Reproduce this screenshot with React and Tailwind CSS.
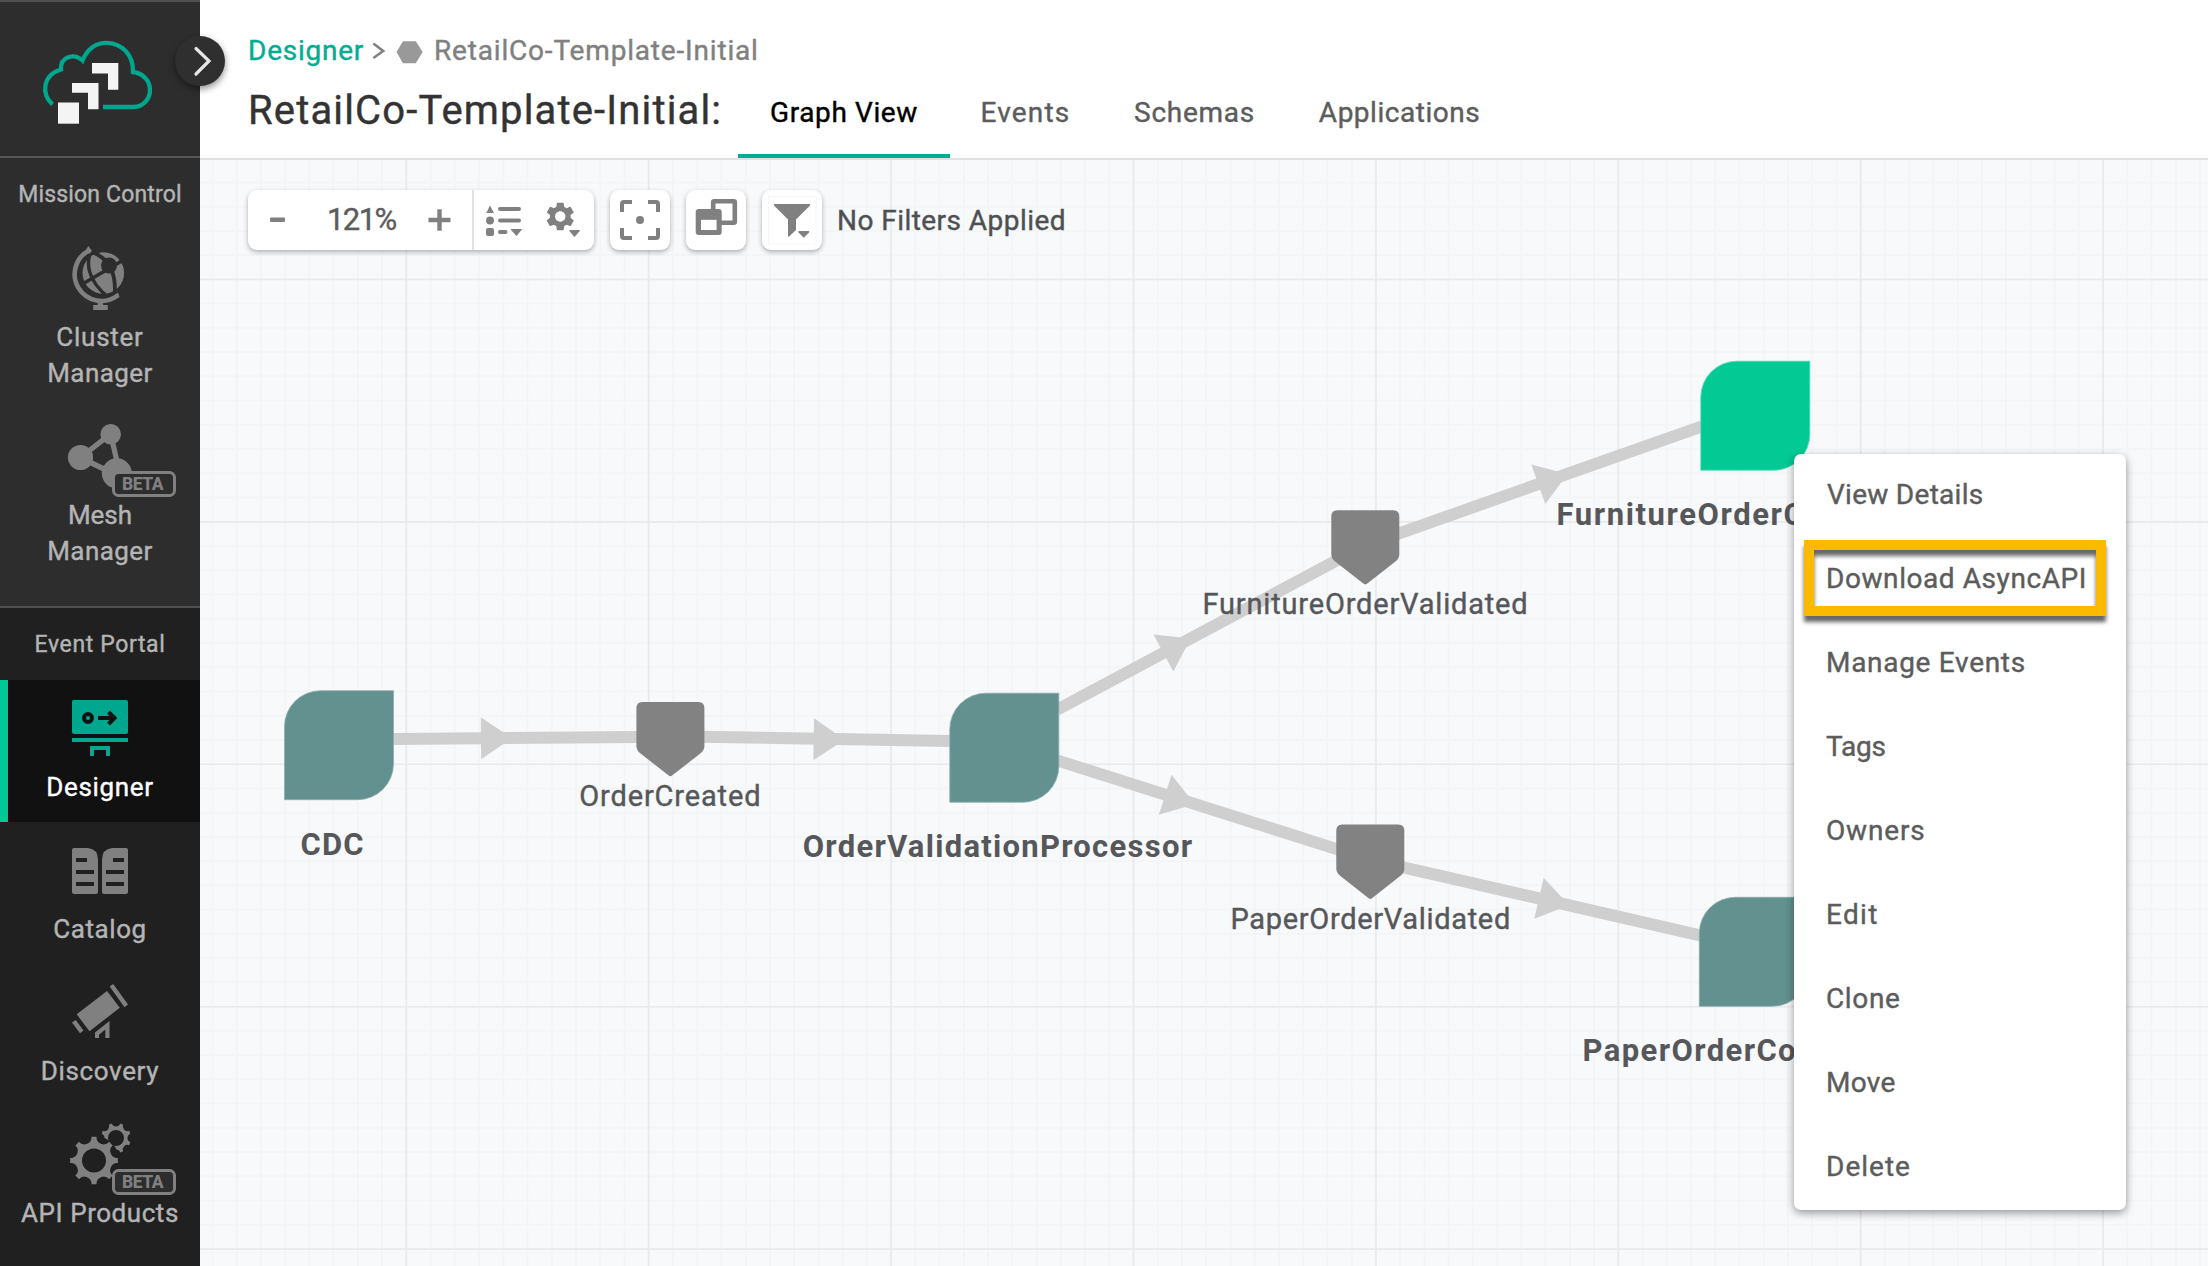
import React from "react";
import { MdSettings } from "react-icons/md";

const range = (start, step, end) => {
  const out = [];
  for (let v = start; v < end; v += step) out.push(v);
  return out;
};

/* ---------- gear outline with concave gaps between the teeth ---------- */
function gearPath(cx, cy, r, hole, offset, depth) {
  const pt = (deg) => {
    const a = (deg * Math.PI) / 180;
    return `${(cx + r * Math.cos(a)).toFixed(2)} ${(cy + r * Math.sin(a)).toFixed(2)}`;
  };
  let d = `M${pt(offset - 6)}`;
  for (let k = 0; k < 8; k++) {
    const a = offset + k * 45;
    d += ` L${pt(a + 6)} A${depth} ${depth} 0 0 0 ${pt(a + 39)}`;
  }
  d += ` Z M${cx + hole} ${cy} A${hole} ${hole} 0 1 0 ${cx - hole} ${cy} A${hole} ${hole} 0 1 0 ${cx + hole} ${cy} Z`;
  return d;
}

/* ---------- sidebar ---------- */
function Beta({ y }) {
  return (
    <g>
      <rect x="113.5" y={y + 1.5} width="61" height="23" rx="5" fill="#2d2d2d" stroke="#808080" strokeWidth="3" />
      <text x="122" y={y + 19} className="fill-[#808080] text-[17.5px] font-extrabold tracking-[-0.5px]">BETA</text>
    </g>
  );
}

function CloudLogo() {
  return (
    <svg viewBox="0 2 200 154" className="h-[154px] w-[200px]" fill="none">
      <path
        d="M52.5 104.5 C41 94 42.5 75 61 69.5 C60 57 74 52.5 82.5 60.5 C87.500 48 97 42.800 106 42.800 C122 42.800 133.500 55 133 72 C143 73 150 81 150 90 C150 100 142 107 134 107 H103"
        stroke="#00a78f"
        strokeWidth="4.300"
      />
      <g fill="#f4f4f4">
        <path d="M58 102.500H79V123.700H58Z" />
        <path d="M72 83H98.500V109.300H88V92.700H72Z" />
        <path d="M92 63H118.300V89.700H108V73.500H92Z" />
      </g>
    </svg>
  );
}

function GlobeIcon() {
  return (
    <svg viewBox="0 212 200 107" className="h-[107px] w-[200px]" fill="none">
      <circle cx="103.300" cy="273" r="20.800" fill="#808080" />
      <path d="M92.500 248 C85 262 87 280 108 297" stroke="#2d2d2d" strokeWidth="3.400" />
      <path d="M92 252 C108 258 117 272 114.500 297" stroke="#2d2d2d" strokeWidth="3.800" />
      <path d="M80 285.500 L126 258.500" stroke="#2d2d2d" strokeWidth="3.600" />
      <circle cx="109" cy="265.500" r="8" fill="#2d2d2d" />
      <path d="M89.500 250.300 A26.700 26.700 0 1 0 117.500 295.500" stroke="#808080" strokeWidth="4.600" />
      <path d="M86 249.500 L88.500 246 L92 251 L89 254 Z M115.500 294.500 L118 292.500 L119.500 297 L115 299.500 Z" fill="#808080" />
      <path d="M97.700 299H103V305H107.800V310H93.200V305H97.700Z" fill="#808080" />
    </svg>
  );
}

function MeshIcon() {
  return (
    <svg viewBox="0 391 200 106" className="h-[106px] w-[200px] overflow-visible">
      <g stroke="#808080" strokeWidth="5.300">
        <path d="M80.500 457.500 L110.700 434 L118 466 M80.500 457.500 L112 473" fill="none" />
      </g>
      <g fill="#808080">
        <circle cx="80.500" cy="457.500" r="12.600" />
        <circle cx="110.700" cy="434.200" r="10.300" />
        <circle cx="116.800" cy="473.300" r="15" />
      </g>
      <Beta y={471} />
    </svg>
  );
}

function BoardIcon() {
  return (
    <svg viewBox="0 680 200 89" className="-ml-2 h-[89px] w-[200px]" fill="none">
      <rect x="72" y="700" width="56" height="34" rx="2" fill="#00a78f" />
      <path d="M72 738H128V742H72Z M90 746H110V756H106V750H94V756H90Z" fill="#00a78f" />
      <circle cx="88" cy="718" r="4" stroke="#111" strokeWidth="4" />
      <path d="M98 718H114 M108.500 712L114.500 718L108.500 724" stroke="#111" strokeWidth="4" />
    </svg>
  );
}

function CatalogIcon() {
  return (
    <svg viewBox="0 822 200 89" className="h-[89px] w-[200px]">
      <path d="M74 848H88Q98 849 98 860V892Q98 894 96 894H74Q72 894 72 892V850Q72 848 74 848Z" fill="#808080" />
      <path d="M126 848H112Q102 849 102 860V892Q102 894 104 894H126Q128 894 128 892V850Q128 848 126 848Z" fill="#808080" />
      <path
        d="M76 858H87V862H76Z M76 870H94V874H76Z M76 882H94V886H76Z M113 858H124V862H113Z M106 870H124V874H106Z M106 882H124V886H106Z"
        fill="#202020"
      />
    </svg>
  );
}

function TelescopeIcon() {
  return (
    <svg viewBox="0 947 200 106" className="h-[106px] w-[200px]" fill="#808080">
      <path d="M76.700 1014.300L107 991L119.800 1007.700L89.500 1031.300Z" />
      <path d="M109.700 986.500L113.200 984L128 1004.500L124.500 1007.300Z" />
      <path d="M72 1022.500L75.700 1020L83.500 1030.500L80 1033.300Z" />
      <path d="M95 1038V1032.500L109.500 1021V1038H105.300V1029.500L99 1034.800V1038Z" />
    </svg>
  );
}

function GearsIcon() {
  return (
    <svg viewBox="0 1089 200 106" className="h-[106px] w-[200px] overflow-visible">
      <path d={gearPath(116, 1138, 15, 8, 22.5, 4.6)} fill="#808080" fillRule="evenodd" />
      <circle cx="94" cy="1160.500" r="25" fill="#202020" />
      <path d="M94 1160 L104 1139 L112 1144 L116 1152 Z" fill="#202020" />
      <path d={gearPath(94, 1160.5, 24, 12, 0, 7.2)} fill="#808080" fillRule="evenodd" />
      <Beta y={1169} />
    </svg>
  );
}

function NavLabel({ className, children }) {
  return <div className={`text-center text-[26px] leading-9 ${className}`}>{children}</div>;
}

function Sidebar() {
  return (
    <aside className="relative flex h-full w-[200px] shrink-0 flex-col border-t-2 border-[#4f4f4f] bg-[#202020] text-[#b4b4b4]">
      <div className="h-[156px] border-b-2 border-[#575757] bg-[#2d2d2d]">
        <CloudLogo />
      </div>
      <section className="h-[450px] border-b-2 border-[#4f4f4f] bg-[#2d2d2d] pt-[19px]">
        <h2 className="-mb-px text-center text-[23px] leading-9 tracking-[0.16px]">Mission Control</h2>
        <GlobeIcon />
        <NavLabel className="tracking-[0.75px]">Cluster</NavLabel>
        <NavLabel className="tracking-[0.45px]">Manager</NavLabel>
        <MeshIcon />
        <NavLabel className="tracking-[0px]">Mesh</NavLabel>
        <NavLabel className="tracking-[0.45px]">Manager</NavLabel>
      </section>
      <section className="pt-[19px]">
        <h2 className="text-center text-[23px] leading-9 tracking-[0.63px]">Event Portal</h2>
        <div className="mt-[17px] h-[142px] border-l-8 border-[#00c895] bg-[#111111]">
          <BoardIcon />
          <NavLabel className="-ml-2 tracking-[0.68px] text-white">Designer</NavLabel>
        </div>
        <CatalogIcon />
        <NavLabel className="tracking-[0.6px]">Catalog</NavLabel>
        <TelescopeIcon />
        <NavLabel className="tracking-[0.65px]">Discovery</NavLabel>
        <GearsIcon />
        <NavLabel className="tracking-[0.55px]">API Products</NavLabel>
      </section>
      <button className="absolute left-[175px] top-[34px] z-10 size-[50px] rounded-full bg-[#2f2f2f] shadow-[0_3px_7px_rgba(0,0,0,0.45)]">
        <svg viewBox="0 0 50 50" className="size-[50px]" fill="none">
          <path d="M21 12.500L34 25L21 38" stroke="#e6e6e6" strokeWidth="3.200" strokeLinecap="round" />
        </svg>
      </button>
    </aside>
  );
}

/* ---------- header ---------- */
const tabs = [
  { label: "Graph View", cls: "w-[212px] border-b-4 border-[#00ad93] text-black tracking-[0.6px]" },
  { label: "Events", cls: "w-[151px] tracking-[1.2px] text-[#5c5c5c]" },
  { label: "Schemas", cls: "w-[187px] tracking-[0.72px] text-[#5c5c5c]" },
  { label: "Applications", cls: "w-[223px] tracking-[0.52px] text-[#5c5c5c]" },
];

function Header() {
  return (
    <header className="h-[160px] border-b-2 border-[#e1e1e1] bg-white pl-12 pt-[33px]">
      <nav className="flex h-9 items-center text-[28px] leading-9 text-[#808080]">
        <span className="w-[116px] tracking-[0.76px] text-[#00ad93]">Designer</span>
        <svg viewBox="0 1 70 36" className="h-9 w-[69px]" fill="none">
          <path d="M9.500 11.500L19.500 19L9.500 26" stroke="#808080" strokeWidth="2.500" />
          <path d="M39.500 9H52.500L59.500 20L52.500 31.500H39.500L33 20Z" fill="#999" />
        </svg>
        <span className="ml-px tracking-[0.82px]">RetailCo-Template-Initial</span>
      </nav>
      <div className="flex h-[89px]">
        <h1 className="w-[490px] pt-[18px] text-[40px] leading-[48px] tracking-[1.15px] text-[#333333]">
          RetailCo-Template-Initial:
        </h1>
        <div className="flex h-[89px]">
          {tabs.map((t) => (
            <div key={t.label} className={`pt-[26px] text-center text-[28px] leading-9 ${t.cls}`}>
              {t.label}
            </div>
          ))}
        </div>
      </div>
    </header>
  );
}

/* ---------- toolbar ---------- */
const card = "h-[60px] rounded-[9px] bg-white shadow-[0_2px_5px_rgba(0,0,0,0.3)]";

function Toolbar() {
  return (
    <div className="relative flex items-center gap-4">
      <div className={`flex w-[346px] items-center ${card}`}>
        <svg viewBox="248 190 79 60" className="h-[60px] w-[79px]">
          <rect x="270" y="217.500" width="15" height="4.500" rx="1" fill="#808080" />
        </svg>
        <span className="w-[72px] text-[31px] leading-9 tracking-[-1.6px] text-[#5c5c5c]">121%</span>
        <svg viewBox="399 190 195 60" className="h-[60px] w-[195px]" fill="#808080">
          <path d="M428.500 217.700H437.300V209.300H441.700V217.700H450.500V222.300H441.700V230.700H437.300V222.300H428.500Z" />
          <path d="M472 190H474V250H472Z" fill="#e1e1e1" />
          <path d="M490 205.500L494 213H486.300Z" />
          <circle cx="490" cy="220.500" r="4" />
          <rect x="486" y="228" width="8" height="8" rx="2" />
          <rect x="498" y="207" width="23" height="4" rx="2" />
          <rect x="498" y="218.500" width="23" height="4" rx="2" />
          <rect x="498" y="230" width="9.500" height="4" rx="2" />
          <path d="M511.500 229H521.500Q522 229.500 521.500 230L516.500 236L511 230Q510.500 229.300 511.500 229Z" />
          <MdSettings x="543" y="199.200" size={34.5} color="#808080" />
          <path d="M570 230H579.500Q580.500 230.300 579.500 231.300L574.500 237L569.500 231.300Q568.800 230.300 570 230Z" />
        </svg>
      </div>
      <div className={`w-[60px] ${card}`}>
        <svg viewBox="0 0 60 60" className="size-[60px]" fill="none">
          <path d="M22 12H14Q12 12 12 14V22M38 12H46Q48 12 48 14V22M12 38V46Q12 48 14 48H22M48 38V46Q48 48 46 48H38" stroke="#808080" strokeWidth="4" />
          <circle cx="30" cy="30" r="4" fill="#808080" />
        </svg>
      </div>
      <div className={`w-[60px] ${card}`}>
        <svg viewBox="0 0 60 60" className="size-[60px]" fill="none">
          <rect x="27.200" y="11.200" width="21.600" height="21.600" rx="1" stroke="#808080" strokeWidth="4.600" />
          <rect x="9.700" y="19" width="26" height="26" rx="3" fill="#808080" />
          <path d="M15 29.800H30.600V40H15Z" fill="#fff" />
        </svg>
      </div>
      <div className={`w-[60px] ${card}`}>
        <svg viewBox="0 0 60 60" className="size-[60px]">
          <rect x="6.500" y="6.500" width="47.500" height="47.500" fill="none" stroke="#f6f6f6" />
          <path d="M12.500 14H47.500Q48.500 14.500 48 15.500L34 29.500V40L26.800 46.700Q26 47 26 46V29.500L12 15.500Q11.500 14.500 12.500 14Z" fill="#808080" />
          <path d="M37 41H46.500Q48 41.200 47 42.500L41.800 47.800L36.500 42.500Q35.800 41.200 37 41Z" fill="#808080" />
        </svg>
      </div>
      <span className="-ml-px pt-[2px] text-[28px] leading-9 tracking-[0.45px] text-[#4f5052]">No Filters Applied</span>
    </div>
  );
}

/* ---------- graph ---------- */
const edges = [
  { from: [393, 739], to: [638, 737], arrow: [481, 738.3], angle: -0.5 },
  { from: [703, 736.8], to: [951, 741], arrow: [813.7, 739.2], angle: 1 },
  { from: [1057, 709.8], to: [1345, 556], arrow: [1163.4, 653], angle: -28.1 },
  { from: [1395, 534.8], to: [1702, 426.3], arrow: [1538.3, 484.2], angle: -19.4 },
  { from: [1057, 760.4], to: [1340, 850.1], arrow: [1165.2, 794.8], angle: 17.6 },
  { from: [1400, 866.6], to: [1701, 935.6], arrow: [1539, 898.4], angle: 12.9 },
];

const apps = [
  { x: 284.5, y: 690.7, fill: "#629190", edge: "#8aadac" },
  { x: 949.8, y: 693.2, fill: "#629190", edge: "#8aadac" },
  { x: 1700.8, y: 361.2, fill: "#03c995", edge: "#4fdab4" },
  { x: 1699.3, y: 897.3, fill: "#629190", edge: "#8aadac" },
];

const events = [
  { x: 636.4, y: 702 },
  { x: 1331.3, y: 510.2 },
  { x: 1336.3, y: 824.6 },
];

const appLabel = "text-[31px] font-bold";
const eventLabel = "text-[29px] stroke-[#56575a] [stroke-width:0.4px]";

const labels = [
  { text: "CDC", x: 300.5, y: 854.5, cls: `${appLabel} tracking-[1.1px]` },
  { text: "OrderValidationProcessor", x: 802.7, y: 856.7, cls: `${appLabel} tracking-[1.27px]` },
  { text: "FurnitureOrderC", x: 1556.5, y: 524.5, cls: `${appLabel} tracking-[1.6px]` },
  { text: "PaperOrderCo", x: 1582.5, y: 1061, cls: `${appLabel} tracking-[1.4px]` },
  { text: "OrderCreated", x: 579.3, y: 805.7, cls: `${eventLabel} tracking-[0.85px]` },
  { text: "FurnitureOrderValidated", x: 1202.5, y: 614, cls: `${eventLabel} tracking-[0.82px]` },
  { text: "PaperOrderValidated", x: 1230.5, y: 928.5, cls: `${eventLabel} tracking-[0.68px]` },
];

function Graph() {
  return (
    <svg viewBox="200 160 2008 1106" className="absolute inset-0 h-[1106px] w-[2008px]">
      <g stroke="#f3f5f7" strokeWidth="2">
        {range(212.4, 24.24, 2208).map((x) => (
          <path key={x} d={`M${x} 160V1266`} />
        ))}
        {range(182.4, 24.24, 1266).map((y) => (
          <path key={y} d={`M200 ${y}H2208`} />
        ))}
      </g>
      <g stroke="#e8eaec" strokeWidth="1.600">
        {range(406.3, 242.4, 2208).map((x) => (
          <path key={x} d={`M${x} 160V1266`} />
        ))}
        {range(279.5, 242.4, 1266).map((y) => (
          <path key={y} d={`M200 ${y}H2208`} />
        ))}
      </g>
      {edges.map((e) => (
        <g key={e.arrow[0]}>
          <path d={`M${e.from[0]} ${e.from[1]}L${e.to[0]} ${e.to[1]}`} stroke="#cfcfcf" strokeWidth="12" />
          <path
            d="M0 -21L31 0L0 21Z"
            fill="#cfcfcf"
            transform={`translate(${e.arrow[0]} ${e.arrow[1]}) rotate(${e.angle})`}
          />
        </g>
      ))}
      {apps.map((n) => (
        <path
          key={n.x}
          d="M36 0H109V73A36 36 0 0 1 73 109H0V36A36 36 0 0 1 36 0Z"
          fill={n.fill}
          stroke={n.edge}
          strokeWidth="0.8"
          transform={`translate(${n.x} ${n.y})`}
        />
      ))}
      {events.map((n) => (
        <path
          key={n.x}
          d="M6 0H62Q68 0 68 6V44Q68 48 64.500 51L36 73.300Q34 75 32 73.300L3.500 51Q0 48 0 44V6Q0 0 6 0Z"
          fill="#828282"
          transform={`translate(${n.x} ${n.y})`}
        />
      ))}
      {labels.map((l) => (
        <text key={l.text} x={l.x} y={l.y} className={`fill-[#56575a] ${l.cls}`}>
          {l.text}
        </text>
      ))}
    </svg>
  );
}

/* ---------- context menu ---------- */
const menu = [
  { label: "View Details", cls: "tracking-[0.28px] pl-[33px]" },
  { label: "Download AsyncAPI", cls: "tracking-[0.57px] pl-8", highlight: true },
  { label: "Manage Events", cls: "tracking-[0.7px] pl-8" },
  { label: "Tags", cls: "tracking-[-0.2px] pl-8" },
  { label: "Owners", cls: "tracking-[0.85px] pl-8" },
  { label: "Edit", cls: "tracking-[1.3px] pl-8" },
  { label: "Clone", cls: "tracking-[0.65px] pl-8" },
  { label: "Move", cls: "tracking-[0.3px] pl-8" },
  { label: "Delete", cls: "tracking-[1px] pl-8" },
];

function ContextMenu() {
  return (
    <ul className="absolute left-[1594px] top-[294px] w-[332px] rounded-[7px] bg-white text-[28px] leading-9 text-[#5c5c5c] shadow-[0_3px_8px_rgba(0,0,0,0.4)]">
      {menu.map((m) => (
        <li key={m.label} className={`relative flex h-[84px] items-center pb-[3px] ${m.cls}`}>
          {m.highlight && (
            <span className="absolute left-[10px] top-[2px] h-[76px] w-[302px] border-[10px] border-[#fbba00] shadow-[0_6px_4px_rgba(0,0,0,0.6),inset_0_6px_4px_rgba(0,0,0,0.6)]" />
          )}
          {m.label}
        </li>
      ))}
    </ul>
  );
}

export default function App() {
  return (
    <div className="flex h-[1266px] w-[2208px] overflow-hidden bg-white font-['Roboto',sans-serif] font-normal [-webkit-text-stroke-width:0.4px]">
      <Sidebar />
      <div className="flex flex-1 flex-col">
        <Header />
        <main className="relative flex-1 overflow-hidden bg-[#f8f9fb] pl-12 pt-[30px]">
          <Graph />
          <Toolbar />
          <ContextMenu />
        </main>
      </div>
    </div>
  );
}
